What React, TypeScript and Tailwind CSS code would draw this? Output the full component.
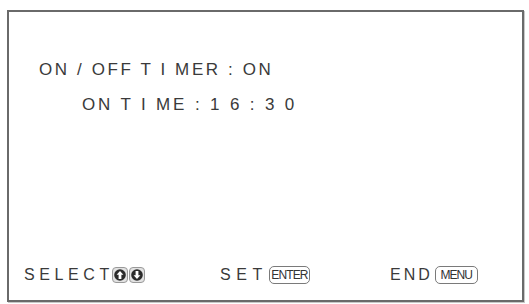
import React from "react";

const ArrowKey = ({ down }: { down?: boolean }) => (
  <span className="inline-flex h-[16px] w-[16px] items-center justify-center rounded-[4px] border border-[#9a9a9a] bg-[#e2e2e2]">
    <svg width="12" height="12" viewBox="0 0 12 12">
      <circle cx="6" cy="6" r="5.8" fill="#2a2a2a" />
      <path
        d={down ? "M6 10 L2.6 6.2 H4.6 V2 H7.4 V6.2 H9.4 Z" : "M6 2 L2.6 5.8 H4.6 V10 H7.4 V5.8 H9.4 Z"}
        fill="#ffffff"
      />
    </svg>
  </span>
);

const KeyBox = ({ label, width }: { label: string; width: string }) => (
  <span
    className={`inline-flex h-[18px] ${width} items-center justify-center rounded-[5px] border-[1.5px] border-[#7a7a7a] text-[12px] leading-none tracking-[-0.9px] text-[#333]`}
  >
    {label}
  </span>
);

export default function App() {
  return (
    <div
      className="h-[304px] w-[529px] bg-white pl-[7px] pr-[5px] pt-[10px] pb-[2px] text-[#3a3a3a]"
      style={{ fontFamily: '"Liberation Sans", Arial, sans-serif' }}
    >
      <div className="flex h-full flex-col border-2 border-[#6a6a6a] shadow-[1px_1px_0_#c8c8c8]">
        <div className="pl-[30px] pt-[49px] text-[17px] leading-[17px] tracking-[2.6px]">
          ON / OFF T I MER : ON
        </div>
        <div className="mt-[18px] pl-[73px] text-[17px] leading-[17px] tracking-[2.85px]">
          ON T I ME : 1 6 : 3 0
        </div>
        <div className="mt-auto mb-[16px] flex items-center pl-[15px] text-[16px] leading-[17px]">
          <span className="flex w-[196px] items-center">
            <span className="tracking-[4.6px]">SELECT</span>
            <span className="ml-[-2px] flex gap-[1px]">
              <ArrowKey />
              <ArrowKey down />
            </span>
          </span>
          <span className="flex w-[170px] items-center">
            <span className="tracking-[5.6px]">SET</span>
            <span className="ml-[1px]">
              <KeyBox label="ENTER" width="w-[41px]" />
            </span>
          </span>
          <span className="flex items-center">
            <span className="tracking-[3px]">END</span>
            <span className="ml-[2px]">
              <KeyBox label="MENU" width="w-[43px]" />
            </span>
          </span>
        </div>
      </div>
    </div>
  );
}
